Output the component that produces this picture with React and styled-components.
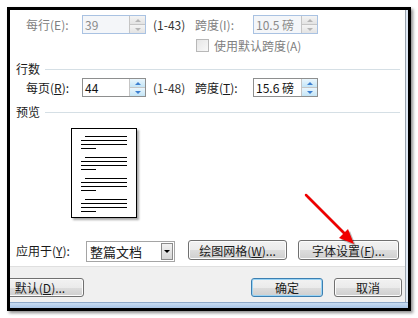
import styled, { createGlobalStyle } from 'styled-components'

const GlobalStyle = createGlobalStyle`
  body {
    margin: 0;
    background: #ffffff;
    font-family: "Noto Sans CJK SC", "Liberation Sans", sans-serif;
    font-size: 12px;
    color: #1a1a1a;
  }
`

const Stage = styled.div`
  position: relative;
  width: 418px;
  height: 318px;
  padding: 7px 0 0 7px;
  box-sizing: border-box;
`

const Frame = styled.div`
  width: 404px;
  height: 304px;
  box-sizing: border-box;
  border: 3px solid #000;
  box-shadow: 2px 2px 3px rgba(0, 0, 0, 0.45);
  display: flex;
  flex-direction: column;
  overflow: hidden;
`

const FrameBody = styled.div`
  flex: 1;
  display: flex;
  min-height: 0;
`

const Client = styled.div`
  flex: 1;
  display: flex;
  flex-direction: column;
  border-right: 1px solid #9aa3ad;
`

const RightEdge = styled.div`
  width: 2px;
  background: #dfe9f5;
`

const BottomEdge = styled.div`
  height: 5px;
  background: linear-gradient(#c7dbf1, #a9c5e6);
  border-top: 1px solid #8fa9c9;
`

const WhiteArea = styled.div`
  height: 256px;
  padding: 0 5px 0 6px;
  background: #fff;
  overflow: hidden;
  display: flex;
  flex-direction: column;
`

const GrayArea = styled.div`
  flex: 1;
  background: #f0f0f0;
  border-top: 1px solid #dfdfdf;
  padding-top: 11px;
  display: flex;
  align-items: flex-start;
`

const SectionHeader = styled.div`
  display: flex;
  align-items: center;
  gap: 5px;
  height: 14px;
  line-height: 14px;
  margin-top: ${({ $top }) => $top}px;
  white-space: nowrap;

  &::after {
    content: '';
    flex: 1;
    height: 1px;
    background: #d5dfe5;
  }
`

const FieldGrid = styled.div`
  display: grid;
  grid-template-columns: 56px 64px 49px 58px 65px;
  align-items: center;
  height: 19px;
  margin-top: ${({ $top }) => $top}px;
  padding-left: 10px;
`

const Label = styled.span`
  color: ${({ $disabled }) => ($disabled ? '#808080' : '#1a1a1a')};
  white-space: nowrap;
  u { text-decoration: ${({ $disabled }) => ($disabled ? 'none' : 'underline')}; }
`

const Range = styled.span`
  padding-left: 7px;
  color: #333;
  white-space: nowrap;
`

const Spin = styled.div`
  display: flex;
  height: 19px;
  box-sizing: border-box;
  border: 1px solid ${({ $disabled }) => ($disabled ? '#a9c2e2' : '#8e8f8f')};
  background: ${({ $disabled }) => ($disabled ? '#f4f6f9' : '#fff')};
`

const SpinText = styled.div`
  flex: 1;
  padding-left: 2px;
  line-height: 17px;
  color: ${({ $disabled }) => ($disabled ? '#8a8a8a' : '#111')};
  white-space: nowrap;
  overflow: hidden;
`

const SpinButtons = styled.div`
  width: 15px;
  display: flex;
  flex-direction: column;
  border-left: 1px solid #c5c5c5;
`

const SpinHalf = styled.div`
  flex: 1;
  display: flex;
  align-items: center;
  justify-content: center;
  background: ${({ $hot }) =>
    $hot ? 'linear-gradient(#eaf6fd, #c4e5f6)' : 'linear-gradient(#f4f4f4, #e3e3e3)'};
  border-bottom: ${({ $up }) => ($up ? '1px solid #c5c5c5' : 'none')};

  &::before {
    content: '';
    border-left: 3px solid transparent;
    border-right: 3px solid transparent;
    ${({ $up, $hot, $disabled }) => {
      const c = $disabled ? '#b5b5b5' : $hot ? '#3c7fd0' : '#555'
      return $up ? `border-bottom: 3px solid ${c};` : `border-top: 3px solid ${c};`
    }}
  }
`

const CheckRow = styled.div`
  display: flex;
  align-items: center;
  gap: 5px;
  height: 13px;
  margin-top: 5px;
  padding-left: 180px;
`

const CheckBox = styled.span`
  width: 13px;
  height: 13px;
  box-sizing: border-box;
  border: 1px solid #b8b8b8;
  background: linear-gradient(135deg, #e6e6e6, #f8f8f8);
`

const Page = styled.div`
  width: 66px;
  height: 90px;
  box-sizing: border-box;
  margin: 9px 0 0 55px;
  border: 1px solid #000;
  background: #fff;
  box-shadow: 2px 2px 2px rgba(0, 0, 0, 0.35);
  padding: 7px 0 0 9px;
  display: flex;
  flex-direction: column;
  gap: 8px;
`

const Para = styled.div`
  display: flex;
  flex-direction: column;
  gap: 3px;
`

const TextLine = styled.div`
  height: 1px;
  background: #000;
  width: ${({ $w }) => $w}px;
  margin-left: ${({ $indent }) => $indent || 0}px;
`

const ApplyRow = styled.div`
  display: flex;
  align-items: flex-start;
  margin-top: 22px;
  height: 22px;
`

const ApplyLabel = styled.span`
  line-height: 22px;
  width: 70px;
  white-space: nowrap;
  u { text-decoration: underline; }
`

const Select = styled.div`
  width: 89px;
  height: 21px;
  margin-top: 1px;
  box-sizing: border-box;
  border: 1px solid #a5a5a5;
  display: flex;
  background: #fff;
`

const SelectText = styled.div`
  flex: 1;
  padding-left: 3px;
  line-height: 19px;
  font-size: 13px;
`

const SelectArrow = styled.div`
  width: 12px;
  margin: 1px;
  box-sizing: border-box;
  border: 1px solid #8b8b8b;
  background: linear-gradient(#f2f2f2, #d6d6d6);
  display: flex;
  align-items: center;
  justify-content: center;

  &::before {
    content: '';
    border-left: 3px solid transparent;
    border-right: 3px solid transparent;
    border-top: 3px solid #000;
  }
`

const Button = styled.button`
  width: ${({ $w }) => $w}px;
  height: ${({ $h }) => $h || 20}px;
  margin-left: ${({ $ml }) => $ml || 0}px;
  padding: 0;
  box-sizing: border-box;
  font-family: inherit;
  font-size: 12px;
  color: #1a1a1a;
  white-space: nowrap;
  border-radius: 3px;
  border: 1px solid ${({ $focus }) => ($focus ? '#3c7fb1' : '#707070')};
  background: linear-gradient(#f2f2f2 0%, #ebebeb 50%, #dddddd 51%, #cfcfcf 100%);
  box-shadow: ${({ $focus }) =>
    $focus ? 'inset 0 0 0 1px #9ad4f5' : 'inset 0 0 0 1px #fcfcfc'};
  u { text-decoration: underline; }
`

const Arrow = styled.svg`
  position: absolute;
  left: 0;
  top: 0;
  pointer-events: none;
`

function Spinner({ value, disabled, hot }) {
  return (
    <Spin $disabled={disabled}>
      <SpinText $disabled={disabled}>{value}</SpinText>
      <SpinButtons>
        <SpinHalf $up $hot={hot} $disabled={disabled} />
        <SpinHalf $hot={hot} $disabled={disabled} />
      </SpinButtons>
    </Spin>
  )
}

function Preview() {
  const paras = [0, 1, 2, 3]
  return (
    <Page>
      {paras.map(i => (
        <Para key={i}>
          <TextLine $w={42} $indent={4} />
          <TextLine $w={46} />
          <TextLine $w={46} />
          <TextLine $w={15} />
        </Para>
      ))}
    </Page>
  )
}

export default function App() {
  return (
    <Stage>
      <GlobalStyle />
      <Frame>
        <FrameBody>
          <Client>
            <WhiteArea>
              <SectionHeader $top={-14}>字符数</SectionHeader>
              <FieldGrid $top={5}>
                <Label $disabled>每行(<u>E</u>):</Label>
                <Spinner value="39" disabled />
                <Range>(1-43)</Range>
                <Label $disabled>跨度(<u>I</u>):</Label>
                <Spinner value="10.5 磅" disabled />
              </FieldGrid>
              <CheckRow>
                <CheckBox />
                <Label $disabled>使用默认跨度(<u>A</u>)</Label>
              </CheckRow>

              <SectionHeader $top={10}>行数</SectionHeader>
              <FieldGrid $top={2}>
                <Label>每页(<u>R</u>):</Label>
                <Spinner value="44" hot />
                <Range>(1-48)</Range>
                <Label>跨度(<u>T</u>):</Label>
                <Spinner value="15.6 磅" hot />
              </FieldGrid>

              <SectionHeader $top={8}>预览</SectionHeader>
              <Preview />

              <ApplyRow>
                <ApplyLabel>应用于(<u>Y</u>):</ApplyLabel>
                <Select>
                  <SelectText>整篇文档</SelectText>
                  <SelectArrow />
                </Select>
                <Button $w={99} $ml={13}>绘图网格(<u>W</u>)...</Button>
                <Button $w={101} $ml={11}>字体设置(<u>F</u>)...</Button>
              </ApplyRow>
            </WhiteArea>
            <GrayArea>
              <Button $w={88} $h={19} $ml={-14}>默认(<u>D</u>)...</Button>
              <Button $w={72} $h={19} $ml={167} $focus>确定</Button>
              <Button $w={68} $h={19} $ml={11}>取消</Button>
            </GrayArea>
          </Client>
          <RightEdge />
        </FrameBody>
        <BottomEdge />
      </Frame>
      <Arrow width="418" height="318" viewBox="0 0 418 318">
        <g transform="translate(2 2)" fill="rgba(0,0,0,0.25)" stroke="rgba(0,0,0,0.25)">
          <line x1="306" y1="195" x2="344" y2="233" strokeWidth="2.5" />
          <polygon points="354,244 339,238 348,229" stroke="none" />
        </g>
        <line x1="306" y1="195" x2="344" y2="233" stroke="#f00000" strokeWidth="2.5" strokeLinecap="round" />
        <polygon points="354,244 339,238 348,229" fill="#f00000" />
      </Arrow>
    </Stage>
  )
}
